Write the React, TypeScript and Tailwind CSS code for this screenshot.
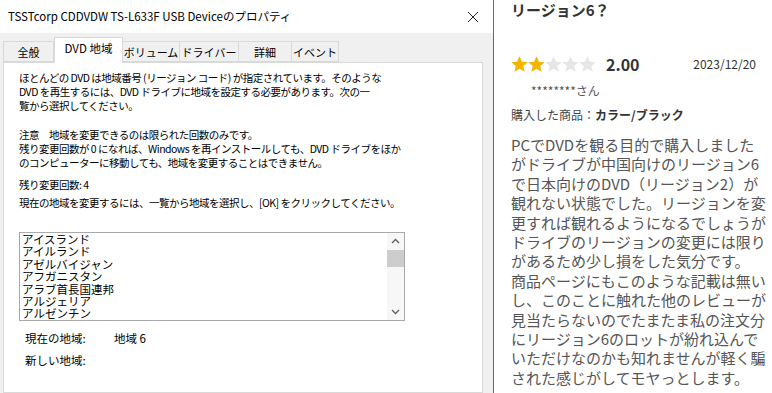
import React from 'react';

const jp = { fontFamily: '"Noto Sans CJK JP", "Noto Sans", sans-serif' };

const tabs = ['全般', 'DVD 地域', 'ボリューム', 'ドライバー', '詳細', 'イベント'];
const tabWidths = ['w-[51px]', 'w-[69px]', 'w-[58px]', 'w-[60px]', 'w-[54px]', 'w-[48px]'];

const regions = ['アイスランド', 'アイルランド', 'アゼルバイジャン', 'アフガニスタン', 'アラブ首長国連邦', 'アルジェリア', 'アルゼンチン', 'アルバ'];

const review = [
  'PCでDVDを観る目的で購入しました',
  'がドライブが中国向けのリージョン6',
  'で日本向けのDVD（リージョン2）が',
  '観れない状態でした。リージョンを変',
  '更すれば観れるようになるでしょうが',
  'ドライブのリージョンの変更には限り',
  'があるため少し損をした気分です。',
  '商品ページにもこのような記載は無い',
  'し、このことに触れた他のレビューが',
  '見当たらないのでたまたま私の注文分',
  'にリージョン6のロットが紛れ込んで',
  'いただけなのかも知れませんが軽く騙',
  'された感じがしてモヤっとします。',
];

const Star = ({ filled }: { filled: boolean }) => (
  <svg className="shrink-0 w-[17px] h-[17px]" viewBox="0 0 24 24">
    <path
      d="M12 0.5l3.4 7.5 8.1.8-6.2 5.4 1.9 8.1L12 18.1l-7.2 4.2 1.9-8.1L.5 8.8l8.1-.8z"
      fill={filled ? '#f5b400' : '#e6e6e6'}
    />
  </svg>
);

const PropertiesDialog = () => (
  <div className="w-[493px] h-full flex flex-col bg-[#f0f0f0]" style={jp}>
    {/* title bar */}
    <div className="h-[33px] bg-white flex items-center justify-between pl-[8px] pr-[14px]">
      <span className="text-[11.5px] text-black">TSSTcorp CDDVDW TS-L633F USB Deviceのプロパティ</span>
      <svg width="12" height="12" viewBox="0 0 12 12">
        <path d="M1 1L11 11M11 1L1 11" stroke="#222" strokeWidth="1" />
      </svg>
    </div>

    <div className="flex-1 flex flex-col pl-[3px] pr-[10px] pt-[4px]">
      {/* tabs */}
      <div className="flex items-end h-[25px] pl-[1px] whitespace-nowrap">
        {tabs.map((t, i) =>
          i === 1 ? (
            <div
              key={t}
              className={`${tabWidths[i]} h-[26px] -mb-px bg-white border border-b-0 border-[#d9d9d9] flex items-center justify-center text-[11.5px] text-black relative z-10 pb-[3px]`}
            >
              {t}
            </div>
          ) : (
            <div
              key={t}
              className={`${tabWidths[i]} h-[21px] bg-[#f0f0f0] border border-[#d9d9d9] -ml-px flex items-center justify-center text-[11px] text-black pt-[2px]`}
            >
              {t}
            </div>
          )
        )}
      </div>

      {/* panel */}
      <div className="flex-1 bg-white border border-[#d9d9d9] pl-[15px] pr-[16px] pt-[8px] text-[10.5px] leading-[14px] tracking-[-0.5px] text-black whitespace-nowrap">
        <p>ほとんどの DVD は地域番号 (リージョン コード) が指定されています。そのような</p>
        <p>DVD を再生するには、DVD ドライブに地域を設定する必要があります。次の一</p>
        <p>覧から選択してください。</p>
        <p className="mt-[15px]">注意　地域を変更できるのは限られた回数のみです。</p>
        <p>残り変更回数が 0 になれば、Windows を再インストールしても、DVD ドライブをほか</p>
        <p>のコンピューターに移動しても、地域を変更することはできません。</p>
        <p className="mt-[8px]">残り変更回数: 4</p>
        <p className="mt-[4px]">現在の地域を変更するには、一覧から地域を選択し、[OK] をクリックしてください。</p>

        <div className="mt-[22px] w-[386px] h-[89px] border border-[#a9a9a9] flex overflow-hidden tracking-normal">
          <div className="flex-1 pl-[2px] text-[11.5px] leading-[12.4px] overflow-hidden">
            {regions.map(r => (
              <div key={r}>{r}</div>
            ))}
          </div>
          <div className="w-[17px] flex flex-col items-center bg-[#f7f7f7]">
            <svg width="17" height="17" viewBox="0 0 17 17">
              <path d="M5 10l3.5-3.5L12 10" stroke="#606060" strokeWidth="1.3" fill="none" />
            </svg>
            <div className="w-[17px] h-[17px] bg-[#cdcdcd]" />
            <div className="flex-1" />
            <svg width="17" height="17" viewBox="0 0 17 17">
              <path d="M5 7l3.5 3.5L12 7" stroke="#606060" strokeWidth="1.3" fill="none" />
            </svg>
          </div>
        </div>

        <div className="mt-[10px] pl-[6px] flex text-[11.5px] tracking-normal">
          <span className="w-[89px]">現在の地域:</span>
          <span>地域 6</span>
        </div>
        <div className="mt-[8px] pl-[6px] text-[11.5px] tracking-normal">新しい地域:</div>
      </div>
    </div>
  </div>
);

const ReviewPanel = () => (
  <div className="flex-1 h-full bg-white pl-[17px] pr-[4px] overflow-hidden" style={jp}>
    <h2 className="text-[15px] font-bold text-[#333] leading-[20px]">リージョン6？</h2>
    <div className="mt-[32px] flex items-center">
      <div className="flex">
        <Star filled />
        <Star filled />
        <Star filled={false} />
        <Star filled={false} />
        <Star filled={false} />
      </div>
      <span className="ml-[10px] text-[16px] font-bold text-[#333]">2.00</span>
      <span className="ml-auto mr-[12px] text-[12px] text-[#333]">2023/12/20</span>
    </div>
    <div className="mt-[6px] pl-[20px] text-[12px] text-[#555]">********さん</div>
    <div className="mt-[6px] text-[12px] text-[#444]">
      購入した商品：<span className="font-bold text-[#333]">カラー/ブラック</span>
    </div>
    <div className="mt-[11px] text-[15px] leading-[19.4px] text-[#555] whitespace-nowrap">
      {review.map(l => (
        <div key={l}>{l}</div>
      ))}
    </div>
  </div>
);

export default function App() {
  return (
    <div className="w-[772px] h-[393px] flex overflow-hidden bg-white">
      <PropertiesDialog />
      <div className="w-px h-full bg-[#6a6a6a]" />
      <ReviewPanel />
    </div>
  );
}
